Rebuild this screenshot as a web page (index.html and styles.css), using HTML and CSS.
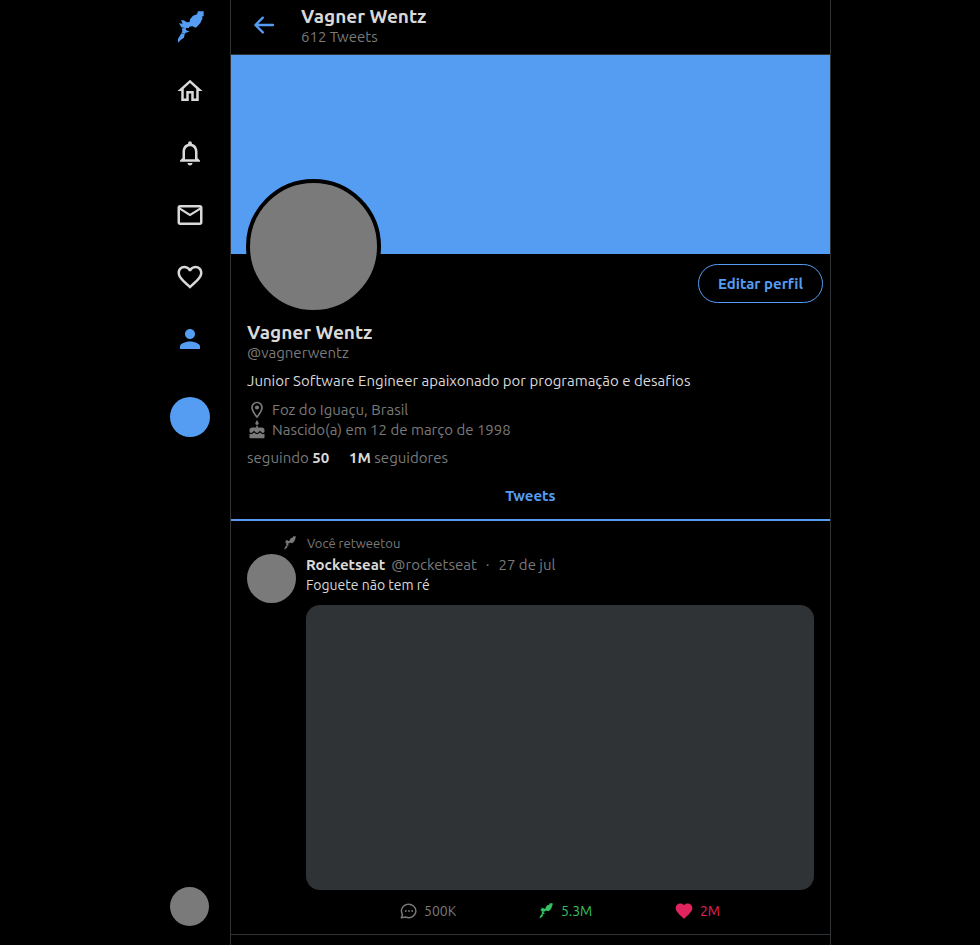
FILE: index.html
```html
<!DOCTYPE html>
<html lang="pt-BR">
<head>
<meta charset="utf-8">
<meta name="viewport" content="width=device-width, initial-scale=1">
<title>Vagner Wentz</title>
<link rel="stylesheet" href="styles.css">
</head>
<body>
<svg class="symbols" aria-hidden="true">
  <symbol id="rocket" viewBox="45 32 87 96">
    <path d="M114 33H131V47L125 50L128 53L121 68L108 82L97 78L88 79L87 83H75L64 81L57 69L68 70L63 60H71L81 66L89 65L90 57L99 46L111 42ZM66 84L77 83L79 90L89 94L77 97L75 101L65 97L67 91ZM64 99L74 101L72 112L63 118L54 127V116L58 109Z"/>
  </symbol>
  <symbol id="heart" viewBox="0 0 24 24">
    <path d="M12 21.35l-1.45-1.32C5.4 15.36 2 12.28 2 8.5 2 5.42 4.42 3 7.5 3c1.74 0 3.41.81 4.5 2.09C13.09 3.81 14.76 3 16.5 3 19.58 3 22 5.42 22 8.5c0 3.78-3.4 6.86-8.55 11.54L12 21.35z"/>
  </symbol>
</svg>
<div class="layout">
  <nav class="menu" aria-label="Menu">
    <a class="logo" href="#" aria-label="Início"><svg><use href="#rocket"/></svg></a>
    <a class="item" href="#" aria-label="Página inicial"><svg viewBox="0 0 24 24"><path d="M12 5.69l5 4.5V18h-2v-6H9v6H7v-7.81l5-4.5M12 3L2 12h3v8h6v-6h2v6h6v-8h3L12 3z"/></svg></a>
    <a class="item" href="#" aria-label="Notificações"><svg viewBox="0 0 24 24"><path d="M12 22c1.100 0 2-.9 2-2h-4c0 1.100.9 2 2 2zm6-6v-5c0-3.070-1.630-5.640-4.500-6.320V4c0-.83-.67-1.500-1.500-1.500s-1.500.67-1.500 1.500v.68C7.640 5.360 6 7.920 6 11v5l-2 2v1h16v-1l-2-2zm-2 1H8v-6c0-2.480 1.510-4.500 4-4.500s4 2.020 4 4.500v6z"/></svg></a>
    <a class="item" href="#" aria-label="Mensagens"><svg viewBox="0 0 24 24"><path d="M22 6c0-1.100-.9-2-2-2H4c-1.100 0-2 .9-2 2v12c0 1.100.9 2 2 2h16c1.100 0 2-.9 2-2V6zm-2 0l-8 5-8-5h16zm0 12H4V8l8 5 8-5v10z"/></svg></a>
    <a class="item" href="#" aria-label="Curtidas"><svg viewBox="0 0 24 24"><path d="M16.500 3c-1.740 0-3.410.81-4.500 2.090C10.910 3.810 9.240 3 7.500 3 4.420 3 2 5.420 2 8.500c0 3.780 3.400 6.860 8.550 11.540L12 21.350l1.450-1.320C18.600 15.360 22 12.280 22 8.500 22 5.420 19.580 3 16.500 3zm-4.400 15.550l-.1.100-.1-.1C7.140 14.240 4 11.390 4 8.500 4 6.500 5.500 5 7.500 5c1.540 0 3.040.99 3.570 2.360h1.870C13.460 5.990 14.960 5 16.500 5c2 0 3.500 1.500 3.500 3.500 0 2.890-3.140 5.740-7.900 10.050z"/></svg></a>
    <a class="item active" href="#" aria-label="Perfil"><svg viewBox="0 0 24 24"><path d="M12 12c2.210 0 4-1.790 4-4s-1.790-4-4-4-4 1.790-4 4 1.790 4 4 4zm0 2c-2.670 0-8 1.340-8 4v2h16v-2c0-2.660-5.330-4-8-4z"/></svg></a>
    <button class="compose" type="button" aria-label="Tweetar"></button>
    <div class="me"></div>
  </nav>

  <main class="main">
    <header class="topbar">
      <button class="back" type="button" aria-label="Voltar"><svg viewBox="0 0 24 24"><path d="M21 12H3.500M10.800 4.600L3.400 12l7.400 7.400" fill="none" stroke="currentColor" stroke-width="2.300" stroke-linecap="round" stroke-linejoin="round"/></svg></button>
      <div>
        <strong class="name">Vagner Wentz</strong>
        <div class="muted">612 Tweets</div>
      </div>
    </header>
    <div class="banner"><div class="avatar"></div></div>
    <section class="profile">
      <button class="edit" type="button">Editar perfil</button>
      <h1 class="name">Vagner Wentz</h1>
      <div class="muted">@vagnerwentz</div>
      <p class="bio">Junior Software Engineer apaixonado por programação e desafios</p>
      <ul class="facts">
        <li><svg viewBox="0 0 24 24"><path d="M12 2C8.130 2 5 5.130 5 9c0 5.250 7 13 7 13s7-7.750 7-13c0-3.870-3.130-7-7-7zM7 9c0-2.760 2.240-5 5-5s5 2.240 5 5c0 2.880-2.880 7.190-5 9.880C9.920 16.210 7 11.850 7 9z"/><circle cx="12" cy="9" r="2.500"/></svg>Foz do Iguaçu, Brasil</li>
        <li><svg viewBox="0 0 24 24"><path d="M12 6c1.110 0 2-.9 2-2 0-.38-.1-.73-.29-1.030L12 0l-1.710 2.970c-.19.300-.29.650-.29 1.030 0 1.100.9 2 2 2zm4.600 9.990l-1.070-1.070-1.080 1.070c-1.300 1.300-3.580 1.310-4.890 0l-1.070-1.070-1.090 1.070C6.750 16.640 5.880 17 4.960 17c-.73 0-1.400-.23-1.960-.61V21c0 .55.45 1 1 1h16c.55 0 1-.45 1-1v-4.610c-.56.38-1.230.61-1.960.61-.92 0-1.790-.36-2.440-1.010zM18 9h-5V7h-2v2H6c-1.660 0-3 1.340-3 3v1.540c0 1.080.88 1.960 1.960 1.960.52 0 1.020-.2 1.380-.57l2.140-2.130 2.130 2.130c.74.740 2.030.740 2.770 0l2.140-2.130 2.130 2.130c.37.370.86.570 1.380.570 1.080 0 1.960-.88 1.960-1.960V12C21 10.340 19.660 9 18 9z"/></svg>Nascido(a) em 12 de março de 1998</li>
      </ul>
      <div class="follow"><span>seguindo <strong>50</strong></span><span><strong>1M</strong> seguidores</span></div>
    </section>
    <a class="tab" href="#">Tweets</a>

    <article class="tweet">
      <div class="retweeted"><svg><use href="#rocket"/></svg>Você retweetou</div>
      <div class="row">
        <div class="author"></div>
        <div class="content">
          <div class="byline"><strong>Rocketseat</strong><span>@rocketseat</span><span class="dot">·</span><time>27 de jul</time></div>
          <p class="text">Foguete não tem ré</p>
          <div class="media"></div>
          <div class="actions">
            <button type="button"><svg viewBox="0 0 18 18"><path d="M1.300 15.700L2.500 12.400A7.200 6.700 0 1 1 5.600 15z" fill="none" stroke="currentColor" stroke-width="1.400" stroke-linejoin="round"/><circle cx="5.800" cy="9" r=".9"/><circle cx="9" cy="9" r=".9"/><circle cx="12.200" cy="9" r=".9"/></svg>500K</button>
            <button class="green" type="button"><svg class="rocket"><use href="#rocket"/></svg>5.3M</button>
            <button class="pink" type="button"><svg class="heart"><use href="#heart"/></svg>2M</button>
          </div>
        </div>
      </div>
    </article>
  </main>
</div>
</body>
</html>
```
FILE: styles.css
```css
* { box-sizing: border-box; margin: 0; padding: 0; }

body {
  background: #000;
  color: #d9d9d9;
  font: 15px/20px Ubuntu, "Noto Sans", sans-serif;
  font-variant-ligatures: none;
}

a { color: inherit; text-decoration: none; }
button { background: none; border: 0; color: inherit; font: inherit; font-variant-ligatures: none; cursor: pointer; }
svg { display: block; flex: none; fill: currentColor; }
ul { list-style: none; }
.symbols { display: none; }
.muted { color: #7a7a7a; }

.layout {
  display: flex;
  justify-content: center;
  min-height: 100vh;
}

.menu {
  position: sticky;
  top: 0;
  display: flex;
  flex-direction: column;
  align-items: center;
  gap: 32px;
  flex: none;
  width: 81px;
  height: 100vh;
  padding: 11px 0 19px;
}
.menu svg { width: 30px; height: 30px; }
.logo, .active { color: #549df2; }
.logo { margin-bottom: 1px; }
.menu .logo svg { width: 29px; height: 32px; }
.compose {
  width: 40px;
  height: 40px;
  margin-top: 11px;
  border-radius: 50%;
  background: #549df2;
}
.me {
  width: 39px;
  height: 39px;
  margin-top: auto;
  border-radius: 50%;
  background: #7a7a7a;
}

.main {
  flex: 1;
  min-width: 0;
  max-width: 601px;
  border: solid #2f3336;
  border-width: 0 1px;
}

.topbar {
  display: flex;
  align-items: flex-start;
  gap: 25px;
  padding: 6px 21px 7px;
  border-bottom: 1px solid #2f3336;
}
.back { padding-top: 7px; color: #549df2; }
.back svg { width: 24px; height: 24px; }
.name {
  display: block;
  font-size: 19px;
  font-weight: 700;
  line-height: 21px;
}

.banner {
  position: relative;
  height: 199px;
  background: #549df2;
}
.avatar {
  position: absolute;
  left: 15px;
  bottom: -60px;
  width: 135px;
  height: 135px;
  border: 4px solid #000;
  border-radius: 50%;
  background: #7a7a7a;
}

.profile {
  display: flex;
  flex-direction: column;
  padding: 10px 7px 0 16px;
}
.edit {
  align-self: flex-end;
  height: 39px;
  margin-bottom: 19px;
  padding: 0 19px;
  border: 1px solid #549df2;
  border-radius: 20px;
  color: #549df2;
  font-weight: 700;
}
.bio { margin: 8px 0 9px; }
.facts { color: #7a7a7a; }
.facts li { display: flex; align-items: center; gap: 5px; }
.facts svg { width: 20px; height: 20px; }
.follow {
  display: flex;
  gap: 20px;
  margin-top: 8px;
  color: #7a7a7a;
}
.follow strong, .byline strong { color: #d9d9d9; }

.tab {
  display: block;
  margin-top: 10px;
  padding: 8px 0 13px;
  border-bottom: 2px solid #549df2;
  color: #549df2;
  font-weight: 700;
  text-align: center;
}

.tweet {
  padding: 12px 16px 13px;
  border-bottom: 1px solid #2f3336;
}
.retweeted {
  display: flex;
  align-items: center;
  gap: 11px;
  margin-bottom: 1px;
  padding-left: 36px;
  color: #7a7a7a;
  font-size: 13px;
}
.retweeted svg { width: 13px; height: 14px; }
.row { display: flex; gap: 10px; }
.author {
  flex: none;
  width: 49px;
  height: 49px;
  border-radius: 50%;
  background: #7a7a7a;
}
.content { flex: 1; min-width: 0; padding-top: 1px; }
.byline { display: flex; gap: 6px; color: #7a7a7a; }
.byline .dot { margin: 0 3px; }
.text { font-size: 14px; }
.media {
  height: 285px;
  margin-top: 10px;
  border-radius: 14px;
  background: #2f3336;
}
.actions {
  display: flex;
  justify-content: space-between;
  width: 63%;
  margin: 11px auto 0;
  color: #7a7a7a;
}
.actions button {
  display: flex;
  align-items: center;
  gap: 6px;
  font-size: 14px;
}
.actions svg { width: 18px; height: 18px; }
.actions .rocket { width: 15px; height: 16px; }
.actions .heart { width: 20px; height: 20px; }
.actions .green { gap: 8px; color: #34c263; }
.actions .pink { color: #e0245e; }
```
